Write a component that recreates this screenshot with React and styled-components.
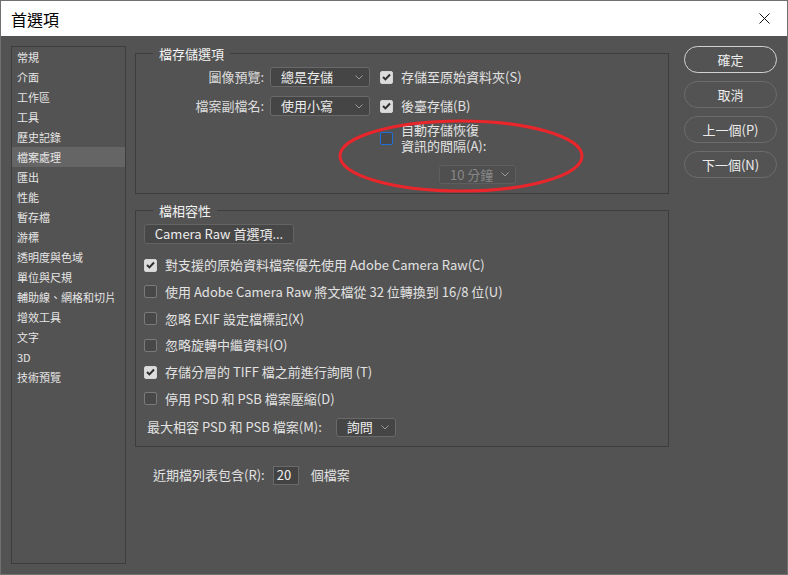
import React from 'react'
import styled, { createGlobalStyle } from 'styled-components'

const GlobalStyle = createGlobalStyle`
  html, body {
    margin: 0;
    padding: 0;
    background: #535353;
  }
  body {
    font-family: "Noto Sans CJK TC", "Noto Sans", sans-serif;
  }
  * {
    box-sizing: border-box;
  }
`

const Window = styled.div`
  position: relative;
  width: 788px;
  height: 575px;
  display: flex;
  flex-direction: column;
  border: 1px solid #707070;
  background: #535353;
  color: #e2e2e2;
  font-size: 13px;
  line-height: 16px;
`

const TitleBar = styled.div`
  flex: none;
  height: 35px;
  display: flex;
  align-items: center;
  justify-content: space-between;
  padding: 0 17px 0 10px;
  background: #fff;
  color: #000;
  font-size: 16px;
`

const Body = styled.div`
  flex: 1;
  display: flex;
  padding: 10px 0 10px 10px;
  min-height: 0;
`

const Sidebar = styled.ul`
  width: 115px;
  margin: 0;
  padding: 0;
  list-style: none;
  border: 1px solid #3d3d3d;
  font-size: 11px;
`

const NavItem = styled.li`
  height: 20px;
  display: flex;
  align-items: center;
  padding-left: 5px;
  background: ${p => (p.$active ? '#656565' : 'transparent')};
  color: #e6e6e6;
`

const Main = styled.div`
  width: 534px;
  margin-left: 9px;
  display: flex;
  flex-direction: column;
`

const Group = styled.fieldset`
  margin: 0 0 ${p => p.$mb || 0}px;
  padding: 6px 8px 9px 8px;
  border: 1px solid #3d3d3d;
  min-width: 0;
`

const Legend = styled.legend`
  margin-left: 9px;
  padding: 0 6px;
  line-height: 15px;
  color: #f2f2f2;
`

const Row = styled.div`
  display: flex;
  align-items: center;
  margin-top: ${p => p.$mt || 0}px;
  margin-left: ${p => p.$ml || 0}px;
`

const FieldLabel = styled.span`
  width: 120px;
  margin-right: 6px;
  text-align: right;
  color: #dcdcdc;
`

const SelectBox = styled.div`
  width: ${p => p.$w}px;
  height: ${p => p.$h || 20}px;
  display: flex;
  align-items: center;
  justify-content: space-between;
  padding: 0 6px 0 10px;
  border: 1px solid ${p => (p.$disabled ? '#5e5e5e' : '#696969')};
  border-radius: 3px;
  background: ${p => (p.$disabled ? '#4f4f4f' : '#454545')};
  color: ${p => (p.$disabled ? '#878787' : '#ececec')};
  font-size: 13px;
`

const CheckRow = styled.label`
  display: flex;
  align-items: center;
  gap: 8px;
  margin-left: ${p => p.$ml || 0}px;
  color: #e2e2e2;
`

const Box = styled.span`
  flex: none;
  width: 13px;
  height: 13px;
  display: flex;
  align-items: center;
  justify-content: center;
  border-radius: 2px;
  border: 1px solid ${p => (p.$focus ? '#1f6fd8' : p.$checked ? '#d4d4d4' : '#7a7a7a')};
  background: ${p => (p.$checked ? '#dcdcdc' : '#484848')};
`

const TwoLines = styled.span`
  display: block;
  line-height: 16px;
`

const PlainButton = styled.div`
  width: 150px;
  height: 20px;
  display: flex;
  align-items: center;
  justify-content: center;
  border: 1px solid #646464;
  border-radius: 3px;
  background: #474747;
  color: #ececec;
`

const CheckList = styled.div`
  display: flex;
  flex-direction: column;
  gap: 6.8px;
  margin-top: 11px;
`

const ListRow = styled.div`
  height: 20px;
  display: flex;
  align-items: center;
`

const MaxRow = styled.div`
  display: flex;
  align-items: center;
  margin-top: 9px;
  padding-left: 3px;
  gap: 14px;
`

const RecentRow = styled.div`
  display: flex;
  align-items: center;
  margin-top: 19px;
  padding-left: 18px;
`

const NumberInput = styled.div`
  width: 26px;
  height: 19px;
  margin: 0 12px 0 8px;
  display: flex;
  align-items: center;
  padding-left: 3px;
  border: 1px solid #6a6a6a;
  background: #434343;
  color: #f0f0f0;
`

const Buttons = styled.div`
  width: 93px;
  margin-left: 15px;
  display: flex;
  flex-direction: column;
  gap: 8px;
`

const PillButton = styled.div`
  height: 27px;
  display: flex;
  align-items: center;
  justify-content: center;
  border: 1px solid ${p => (p.$primary ? '#d2d2d2' : '#6c6c6c')};
  border-radius: 14px;
  color: #ececec;
`

const Annotation = styled.svg`
  position: absolute;
  left: 336px;
  top: 117px;
  pointer-events: none;
`

const Chevron = () => (
  <svg width="8" height="5" viewBox="0 0 8 5">
    <polyline points="0.5,0.5 4,4 7.5,0.5" fill="none" stroke="#9a9a9a" strokeWidth="1" />
  </svg>
)

const Check = ({ checked, focus }) => (
  <Box $checked={checked} $focus={focus}>
    {checked && (
      <svg width="9" height="8" viewBox="0 0 9 8">
        <polyline points="1,4 3.4,6.4 8,1.5" fill="none" stroke="#2e2e2e" strokeWidth="2" />
      </svg>
    )}
  </Box>
)

const Select = ({ value, width, height, disabled }) => (
  <SelectBox $w={width} $h={height} $disabled={disabled}>
    <span>{value}</span>
    <Chevron />
  </SelectBox>
)

const navItems = [
  '常規', '介面', '工作區', '工具', '歷史記錄', '檔案處理', '匯出', '性能', '暫存檔',
  '游標', '透明度與色域', '單位與尺規', '輔助線、網格和切片', '增效工具', '文字', '3D', '技術預覽',
]

const compatOptions = [
  { label: '對支援的原始資料檔案優先使用 Adobe Camera Raw(C)', checked: true },
  { label: '使用 Adobe Camera Raw 將文檔從 32 位轉換到 16/8 位(U)', checked: false },
  { label: '忽略 EXIF 設定檔標記(X)', checked: false },
  { label: '忽略旋轉中繼資料(O)', checked: false },
  { label: '存儲分層的 TIFF 檔之前進行詢問 (T)', checked: true },
  { label: '停用 PSD 和 PSB 檔案壓縮(D)', checked: false },
]

export default function App() {
  return (
    <>
      <GlobalStyle />
      <Window>
        <TitleBar>
          <span>首選項</span>
          <svg width="11" height="11" viewBox="0 0 11 11">
            <path d="M0.5 0.5 L10.5 10.5 M10.5 0.5 L0.5 10.5" stroke="#111" strokeWidth="1" />
          </svg>
        </TitleBar>
        <Body>
          <Sidebar>
            {navItems.map(item => (
              <NavItem key={item} $active={item === '檔案處理'}>{item}</NavItem>
            ))}
          </Sidebar>

          <Main>
            <Group $mb={9}>
              <Legend>檔存儲選項</Legend>
              <Row>
                <FieldLabel>圖像預覽:</FieldLabel>
                <Select value="總是存儲" width={100} />
                <CheckRow $ml={10}>
                  <Check checked />
                  存儲至原始資料夾(S)
                </CheckRow>
              </Row>
              <Row $mt={9}>
                <FieldLabel>檔案副檔名:</FieldLabel>
                <Select value="使用小寫" width={100} />
                <CheckRow $ml={10}>
                  <Check checked />
                  後臺存儲(B)
                </CheckRow>
              </Row>
              <Row $mt={6} $ml={236}>
                <CheckRow>
                  <Check focus />
                  <TwoLines>
                    自動存儲恢復<br />資訊的間隔(A):
                  </TwoLines>
                </CheckRow>
              </Row>
              <Row $mt={11} $ml={295}>
                <Select value="10 分鐘" width={77} height={19} disabled />
              </Row>
            </Group>

            <Group>
              <Legend>檔相容性</Legend>
              <PlainButton>Camera Raw 首選項...</PlainButton>
              <CheckList>
                {compatOptions.map(opt => (
                  <ListRow key={opt.label}>
                    <CheckRow>
                      <Check checked={opt.checked} />
                      {opt.label}
                    </CheckRow>
                  </ListRow>
                ))}
              </CheckList>
              <MaxRow>
                <span>最大相容 PSD 和 PSB 檔案(M):</span>
                <Select value="詢問" width={60} height={19} />
              </MaxRow>
            </Group>

            <RecentRow>
              <span>近期檔列表包含(R):</span>
              <NumberInput>20</NumberInput>
              <span>個檔案</span>
            </RecentRow>
          </Main>

          <Buttons>
            <PillButton $primary>確定</PillButton>
            <PillButton>取消</PillButton>
            <PillButton>上一個(P)</PillButton>
            <PillButton>下一個(N)</PillButton>
          </Buttons>
        </Body>

        <Annotation width="248" height="76" viewBox="0 0 248 76">
          <ellipse cx="124" cy="38" rx="121" ry="35" fill="none" stroke="#e8262b" strokeWidth="3" />
        </Annotation>
      </Window>
    </>
  )
}
